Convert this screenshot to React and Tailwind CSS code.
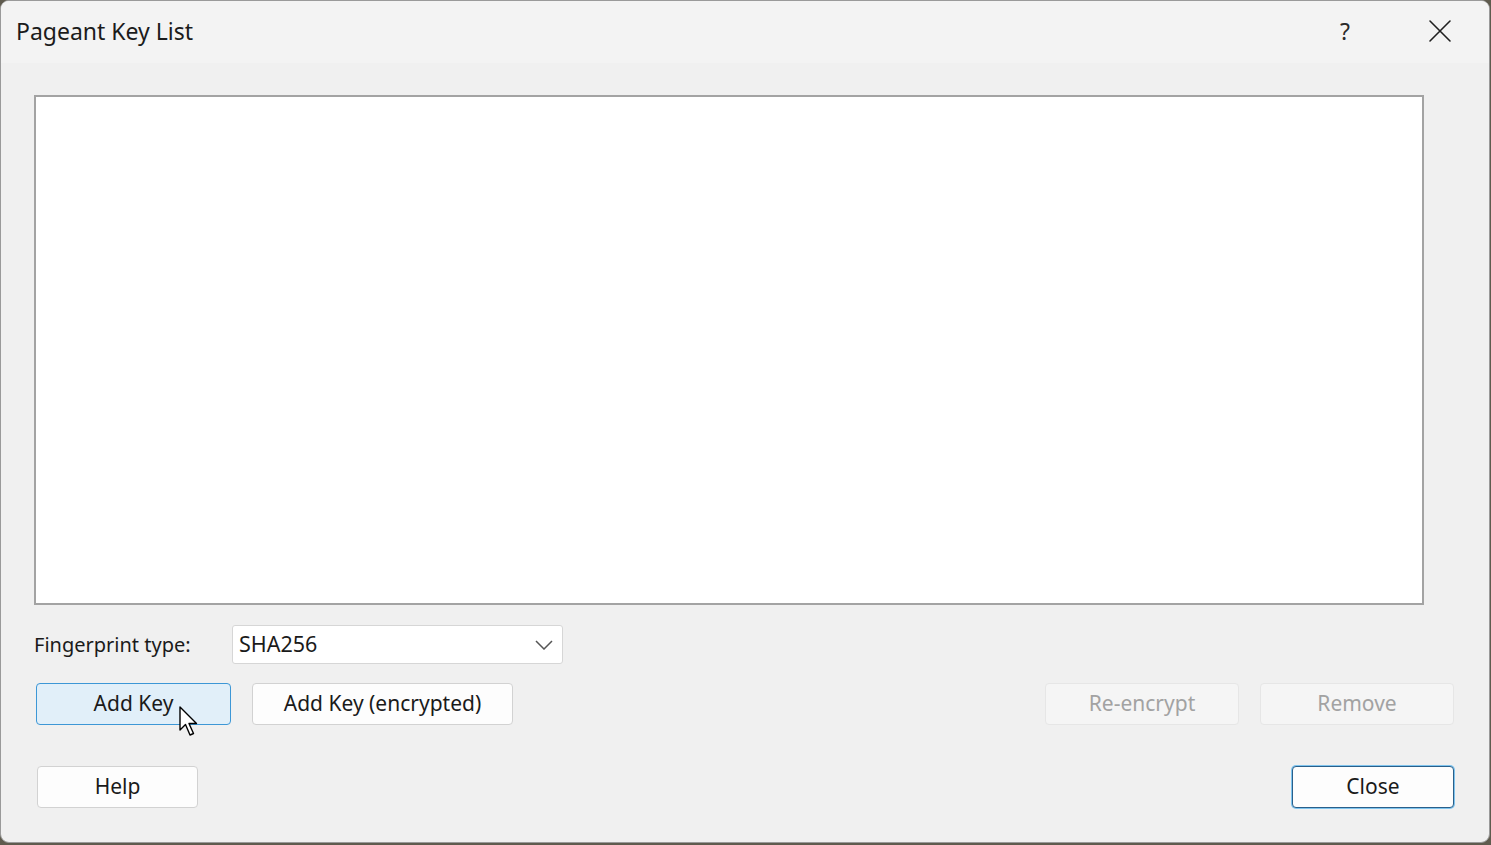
import React from "react";

const font = { fontFamily: '"Segoe UI", "Noto Sans", "Open Sans", sans-serif' };

function Btn({ children, className }) {
  return (
    <div
      className={
        "flex h-[42px] items-center justify-center rounded-[4px] border text-[21px] " +
        className
      }
    >
      {children}
    </div>
  );
}

export default function App() {
  return (
    <div className="h-[845px] w-[1491px] overflow-hidden bg-[#5f5b4e]" style={font}>
      <div className="relative flex h-[843px] w-[1490px] flex-col overflow-hidden rounded-[9px] border border-[#9a9a9a] bg-[#f0f0f0]">
        {/* title bar */}
        <div className="flex h-[62px] shrink-0 items-center bg-[#f3f3f3] pb-[2px] pl-[15px] pr-[34px]">
          <div className="text-[23px] text-[#1b1b1b]">Pageant Key List</div>
          <div className="ml-auto flex items-center">
            <div className="w-[30px] text-center text-[23px] text-[#2a2a2a]">?</div>
            <div className="ml-[65px] flex h-[30px] w-[30px] items-center justify-center">
              <svg width="24" height="24" viewBox="0 0 24 24" fill="none" stroke="#202020" strokeWidth="1.6" strokeLinecap="round">
                <path d="M2 2L22 22M22 2L2 22" />
              </svg>
            </div>
          </div>
        </div>

        {/* content */}
        <div className="flex flex-1 flex-col pl-[33px] pr-[35px] pt-[32px]">
          <div className="h-[510px] w-[1390px] border-2 border-[#a3a3a3] bg-white" />

          <div className="mt-[20px] flex h-[39px] items-center">
            <div className="w-[198px] text-[20px] text-[#1a1a1a]">Fingerprint type:</div>
            <div className="flex h-[39px] w-[331px] items-center rounded-[3px] border border-[#d6d6d6] bg-white pl-[6px] pr-[9px] text-[21.5px] text-[#1a1a1a]">
              SHA256
              <svg className="ml-auto" width="18" height="10" viewBox="0 0 18 10" fill="none" stroke="#555" strokeWidth="1.5">
                <path d="M1 1L9 9L17 1" />
              </svg>
            </div>
          </div>

          <div className="mt-[19px] flex items-center">
            <div className="relative ml-[2px]">
              <Btn className="w-[195px] border-[#3d97d6] bg-[#e1eff9] text-[#1a1a1a]">Add Key</Btn>
              <svg className="absolute left-[142px] top-[22px]" width="22" height="34" viewBox="0 0 22 34">
                <path d="M2 2L2 25L7.5 19.5L12 30L15.5 28.5L11 18.5L18.5 18.5Z" fill="#fff" stroke="#000" strokeWidth="1.4" strokeLinejoin="round" />
              </svg>
            </div>
            <Btn className="ml-[21px] w-[261px] border-[#d2d2d2] bg-[#fdfdfd] text-[#1a1a1a]">Add Key (encrypted)</Btn>
            <Btn className="ml-auto w-[194px] border-[#e6e6e6] bg-[#f5f5f5] text-[#a2a2a2]">Re-encrypt</Btn>
            <Btn className="ml-[21px] w-[194px] border-[#e6e6e6] bg-[#f5f5f5] text-[#a2a2a2]">Remove</Btn>
          </div>

          <div className="mt-[41px] flex items-center">
            <Btn className="ml-[3px] w-[161px] border-[#d2d2d2] bg-[#fdfdfd] text-[#1a1a1a]">Help</Btn>
            <Btn className="ml-auto w-[162px] border-[#2a5f8a] bg-[#fdfdfd] text-[#1a1a1a] ring-1 ring-[#7fc4ee]">Close</Btn>
          </div>
        </div>
      </div>
    </div>
  );
}
